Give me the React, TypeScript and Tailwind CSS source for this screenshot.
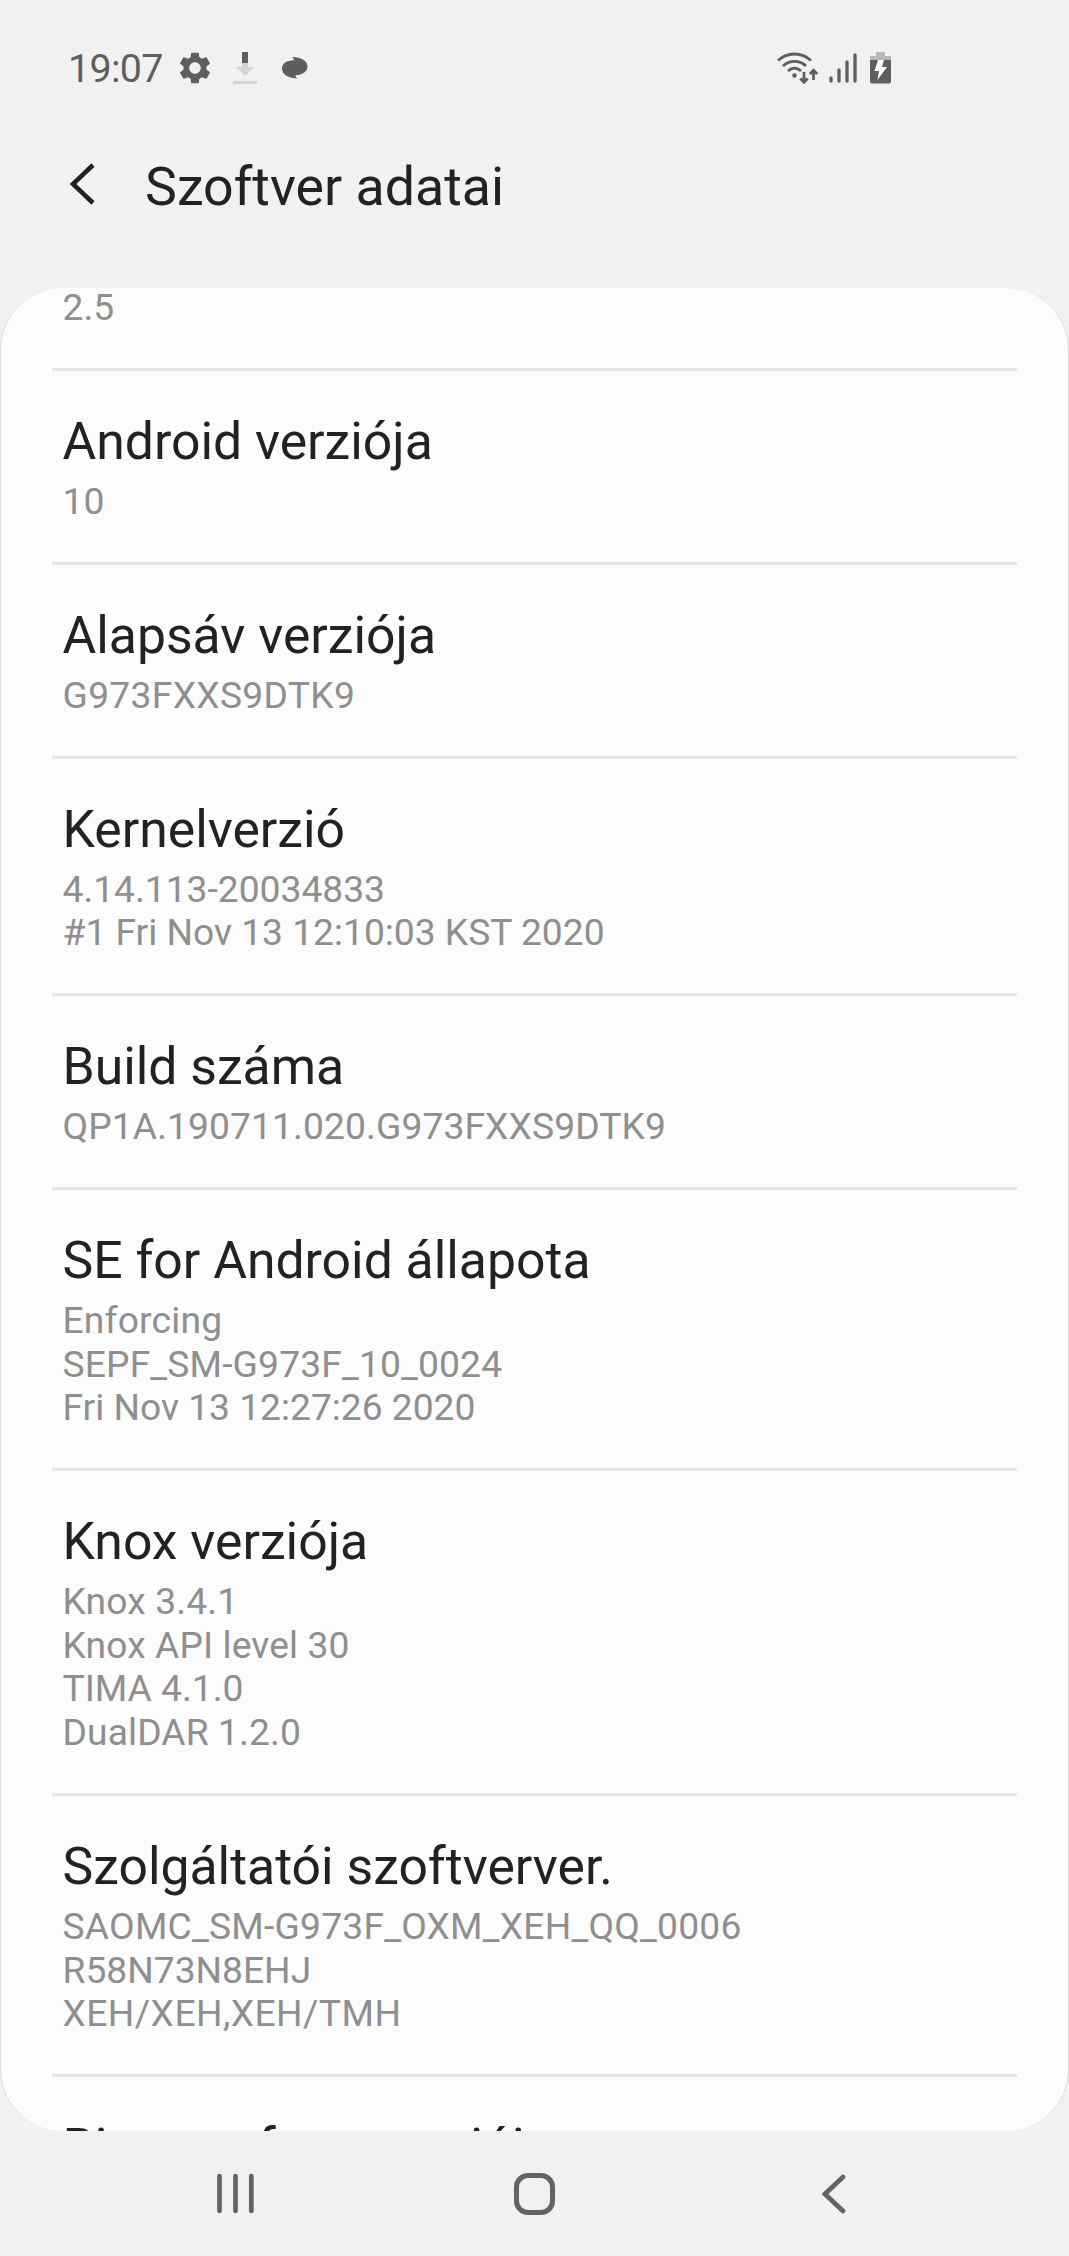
type Line = {
  text: string;
  className?: string;
};

type InfoRowProps = {
  title: string;
  lines?: Line[];
};

const entries: InfoRowProps[] = [
  { title: 'Android verziója', lines: [{ text: '10' }] },
  { title: 'Alapsáv verziója', lines: [{ text: 'G973FXXS9DTK9', className: 'tracking-[0.32px]' }] },
  {
    title: 'Kernelverzió',
    lines: [{ text: '4.14.113-20034833' }, { text: '#1 Fri Nov 13 12:10:03 KST 2020' }],
  },
  {
    title: 'Build száma',
    lines: [{ text: 'QP1A.190711.020.G973FXXS9DTK9', className: 'tracking-[0.11px]' }],
  },
  {
    title: 'SE for Android állapota',
    lines: [
      { text: 'Enforcing', className: 'tracking-[0.2px]' },
      { text: 'SEPF_SM-G973F_10_0024', className: 'tracking-[0.16px]' },
      { text: 'Fri Nov 13 12:27:26 2020' },
    ],
  },
  {
    title: 'Knox verziója',
    lines: [
      { text: 'Knox 3.4.1', className: 'tracking-[0.16px]' },
      { text: 'Knox API level 30', className: 'tracking-[0.12px]' },
      { text: 'TIMA 4.1.0' },
      { text: 'DualDAR 1.2.0', className: 'tracking-[0.12px]' },
    ],
  },
  {
    title: 'Szolgáltatói szoftverver.',
    lines: [
      { text: 'SAOMC_SM-G973F_OXM_XEH_QQ_0006', className: 'tracking-[0.22px]' },
      { text: 'R58N73N8EHJ' },
      { text: 'XEH/XEH,XEH/TMH', className: 'tracking-[0.45px]' },
    ],
  },
  { title: 'Bizt. szoftver verziója' },
];

function GearIcon() {
  return (
    <svg className="h-8 w-8" viewBox="2 2 20 20" fill="#5e5e5e">
      <path d="M19.14 12.94c.04-.3.06-.61.06-.94s-.02-.64-.07-.94l2.03-1.58c.18-.14.23-.41.12-.61l-1.92-3.32c-.12-.22-.37-.29-.59-.22l-2.39.96c-.5-.38-1.03-.7-1.62-.94l-.36-2.54c-.04-.24-.24-.41-.48-.41h-3.84c-.24 0-.43.17-.47.41l-.36 2.54c-.59.24-1.13.57-1.62.94l-2.39-.96c-.22-.08-.47 0-.59.22L2.74 8.87c-.12.21-.08.47.12.61l2.03 1.58c-.05.3-.09.63-.09.94s.02.64.07.94l-2.03 1.58c-.18.14-.23.41-.12.61l1.92 3.32c.12.22.37.29.59.22l2.39-.96c.5.38 1.03.7 1.62.94l.36 2.54c.05.24.24.41.48.41h3.84c.24 0 .44-.17.47-.41l.36-2.54c.59-.24 1.13-.56 1.62-.94l2.39.96c.22.08.47 0 .59-.22l1.92-3.32c.12-.22.07-.47-.12-.61l-2.01-1.58zM12 15.6c-1.98 0-3.6-1.62-3.6-3.6s1.62-3.6 3.6-3.6 3.6 1.62 3.6 3.6-1.62 3.6-3.6 3.6z" />
    </svg>
  );
}

function DownloadIcon() {
  return (
    <svg className="h-8 w-6" viewBox="0 0 24 32">
      <path d="M9 11h6v4h6l-9 9-9-9h6z" fill="#d4d4d4" />
      <path d="M9 0h6v11H9z" fill="#5e5e5e" />
      <path d="M0 29h24v3H0z" fill="#d4d4d4" />
    </svg>
  );
}

function BubbleIcon() {
  return (
    <svg className="ml-[3px] h-[22px] w-[26px]" viewBox="0 0 26 22" fill="#5e5e5e">
      <path d="M10 0C19 0 25.5 4 25.5 9.5C25.5 14.5 21 17.8 13.5 18.3C13.8 19.6 14.3 20.5 15.3 21.3C5.5 21.5 0 17 0 11.5C0 6.5 4.5 3.3 12 3.2C11.7 1.8 11 .8 10 0Z" />
    </svg>
  );
}

function WifiIcon() {
  return (
    <svg className="h-8 w-[42px]" viewBox="0 0 42 32" fill="none" stroke="#5e5e5e" strokeWidth="2.8">
      <path d="M1 8.5C10.5-.2 24.5-.2 34 8.5" />
      <path d="M6 14C12.5 7.8 22.5 7.8 29 14" />
      <path d="M11 19C15 15.3 20 15.3 24 19" />
      <circle cx="17.5" cy="23.5" r="2.2" fill="#5e5e5e" stroke="none" />
      <path d="M27 20V30M23.3 26.5L27 30.2L30.7 26.5M36.5 28V18.5M32.8 22L36.5 18.3L40.2 22" />
    </svg>
  );
}

function SignalIcon() {
  return (
    <svg className="h-[30px] w-7" viewBox="0 0 28 30" stroke="#5e5e5e" strokeWidth="3.3" strokeLinecap="round">
      <path d="M2 25V28M10 17V28M18 9V28M26 2V28" />
    </svg>
  );
}

function BatteryIcon() {
  return (
    <svg className="ml-[3px] h-8 w-[21px]" viewBox="0 0 21 32">
      <path d="M6 0H15V4H21V8H0V4H6Z" fill="#b9b9b9" />
      <path d="M0 8H21V29.5Q21 31.5 19 31.5H2Q0 31.5 0 29.5Z" fill="#5e5e5e" />
      <path d="M8 8H14L12 15H17L7.5 28L9 19H4.5Z" fill="#fff" />
    </svg>
  );
}

function StatusBar() {
  return (
    <header className="flex h-[135px] items-center pl-[67px] text-[#5e5e5e]">
      <span className="w-[93px] pt-[3px] pl-px text-[39.4px] leading-none tracking-[-0.7px]">19:07</span>
      <div className="ml-[19px] flex items-center gap-[22px]">
        <GearIcon />
        <DownloadIcon />
        <BubbleIcon />
      </div>
      <div className="ml-[469px] flex items-center gap-[10px]">
        <WifiIcon />
        <SignalIcon />
        <BatteryIcon />
      </div>
    </header>
  );
}

function InfoRow({ title, lines = [] }: InfoRowProps) {
  return (
    <li className="mx-[51px] border-t-[3px] border-[#e6e6e6] px-[10.5px] pt-[39px] pb-[38.3px]">
      <h2 className="mb-[6px] text-[51.7px] leading-[64px] text-[#222]">{title}</h2>
      {lines.map(({ text, className = '' }) => (
        <p key={text} className={`text-[37.2px] leading-[43.6px] text-[#8f8f8f] ${className}`}>
          {text}
        </p>
      ))}
    </li>
  );
}

function NavigationBar() {
  return (
    <nav className="flex h-[125px] items-center text-[#636363]">
      <svg
        className="ml-[217px] h-[41px] w-[37px]"
        viewBox="0 0 37 41"
        stroke="currentColor"
        strokeWidth="4.7"
        strokeLinecap="round"
      >
        <path d="M2.5 3V38M18.5 3V38M34.3 3V38" />
      </svg>
      <span className="ml-[260px] h-[42px] w-[41px] rounded-[14px] border-5 border-current" />
      <svg
        className="ml-[267px] h-10 w-6"
        viewBox="0 0 24 40"
        fill="none"
        stroke="currentColor"
        strokeWidth="4.7"
        strokeLinecap="round"
      >
        <path d="M21 3L3 20L21 37" />
      </svg>
    </nav>
  );
}

export default function App() {
  return (
    <div className="flex h-[2256px] w-[1069px] flex-col overflow-hidden bg-[#f1f1f1] font-[Roboto,sans-serif]">
      <StatusBar />
      <div className="flex h-[153px] items-start pt-[24px] pl-[69px]">
        <svg className="mt-[4px] h-[42px] w-[26px]" viewBox="0 0 26 42" fill="none" stroke="#222" strokeWidth="4.5">
          <path d="M24 2L4 21L24 40" />
        </svg>
        <h1 className="ml-[50px] text-[53.7px] leading-[56px] text-[#222]">Szoftver adatai</h1>
      </div>
      <main className="h-[1843px] overflow-hidden rounded-[62px] border-x border-[#dcdcdc] bg-[#fcfcfc]">
        <p className="h-20 px-[61.5px] text-[37.2px] leading-[38px] text-[#8f8f8f]">2.5</p>
        <ul>
          {entries.map((entry) => (
            <InfoRow key={entry.title} {...entry} />
          ))}
        </ul>
      </main>
      <NavigationBar />
    </div>
  );
}
